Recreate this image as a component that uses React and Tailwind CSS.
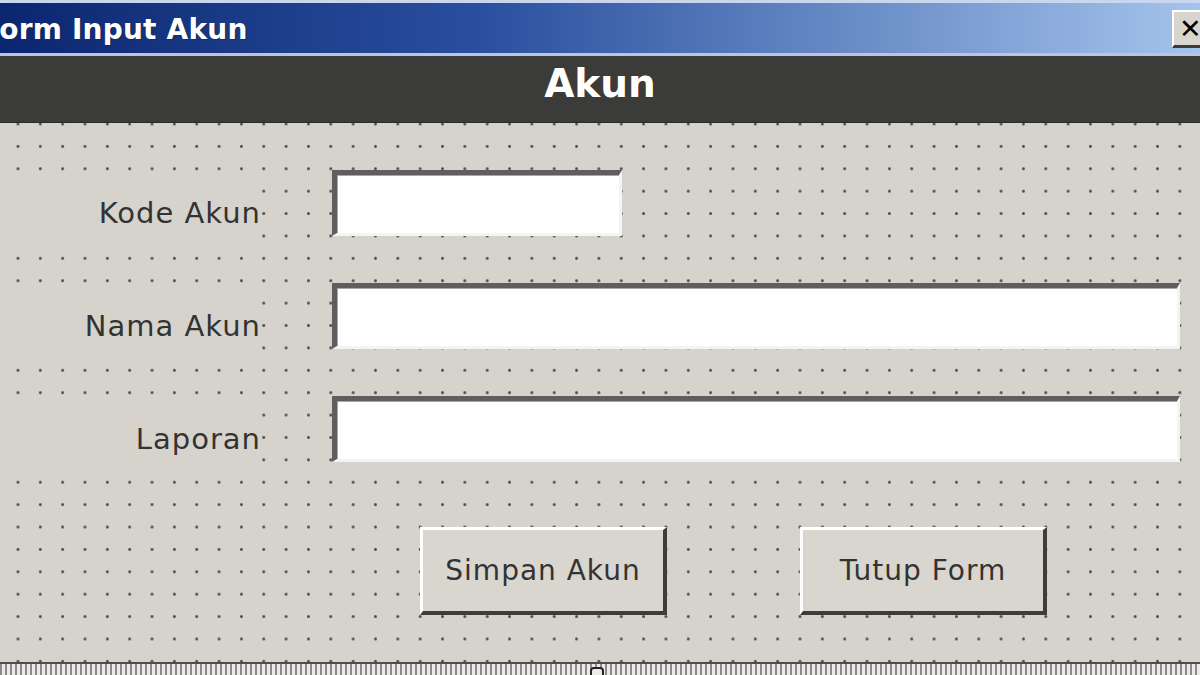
export default function App() {
  const rows = [
    { label: "Kode Akun", width: "w-[290px]" },
    { label: "Nama Akun", width: "w-[848px]" },
    { label: "Laporan", width: "w-[848px]" },
  ];

  return (
    <div className="w-[1200px] h-[675px] overflow-hidden flex flex-col bg-[#d6d3cd] font-['DejaVu_Sans',sans-serif]">
      {/* title bar */}
      <div className="h-[56px] shrink-0 border-t-[3px] border-b-[3px] border-t-[#c9d6ee] border-b-[#b9c6e2] bg-[linear-gradient(90deg,#0b2670_0%,#2a4f9e_40%,#a4c4ec_100%)] flex items-center justify-between">
        <span className="ml-[-19px] mt-[4px] text-[28px] font-bold text-white leading-none tracking-[0.2px] [text-shadow:1px_1px_1px_#1a2a55]">
          Form Input Akun
        </span>
        <div className="w-[40px] h-[38px] mr-[-12px] mt-[2px] bg-[#d8d5cf] border-t-2 border-l-2 border-t-white border-l-white border-b-[3px] border-b-[#3a3a3a] flex items-center pl-[5px]">
          <span className="text-[27px] font-bold text-black leading-none">✕</span>
        </div>
      </div>

      {/* header */}
      <div className="h-[67px] shrink-0 bg-[#3b3b3a] border-b border-[#2a2a2a] flex items-center justify-center">
        <span className="text-[39px] font-bold text-white leading-none mt-[-12px]">Akun</span>
      </div>

      {/* form area */}
      <div className="flex-1 flex flex-col bg-[radial-gradient(circle,#4f4f4f_1.1px,transparent_1.7px)] bg-[length:22.35px_22.4px] bg-[position:6.8px_12.2px]">
        <div className="flex flex-col gap-[34px] mt-[47px]">
          {rows.map((row) => (
            <div key={row.label} className="flex items-start">
              <div className="w-[258px] h-[72px] mt-[7px] bg-[#d6d3cd] flex items-center justify-end">
                <span className="text-[29px] text-[#333] tracking-[1px] leading-none mr-[-3px]">
                  {row.label}
                </span>
              </div>
              <div
                className={`${row.width} h-[66px] ml-[74px] bg-white border-t-[5px] border-l-[5px] border-t-[#5e5e5e] border-l-[#5e5e5e] border-b-[3px] border-r-[3px] border-b-[#f4f4f2] border-r-[#f4f4f2] shadow-[inset_1px_1px_0_#a8a8a8]`}
              />
            </div>
          ))}
        </div>

        <div className="flex gap-[133px] pl-[420px] mt-[52px]">
          {["Simpan Akun", "Tutup Form"].map((b) => (
            <div
              key={b}
              className="w-[247px] h-[88px] bg-[#d9d6d0] border-t-[3px] border-l-[3px] border-t-white border-l-white border-b-[4px] border-r-[4px] border-b-[#3d3d3d] border-r-[#3d3d3d] flex items-center justify-center"
            >
              <span className="text-[28px] text-[#333] tracking-[1px] leading-none">{b}</span>
            </div>
          ))}
        </div>
      </div>

      {/* bottom edge */}
      <div className="relative h-[13px] shrink-0 border-t-2 border-[#4e4e4e] bg-[repeating-linear-gradient(90deg,#8a8a8a_0px,#8a8a8a_2px,#ecebe8_2px,#ecebe8_5px)]">
        <div className="absolute left-[590px] top-[3px] w-[14px] h-[12px] rounded-t-[4px] border-2 border-[#222] bg-[#ecebe8]" />
      </div>
    </div>
  );
}
